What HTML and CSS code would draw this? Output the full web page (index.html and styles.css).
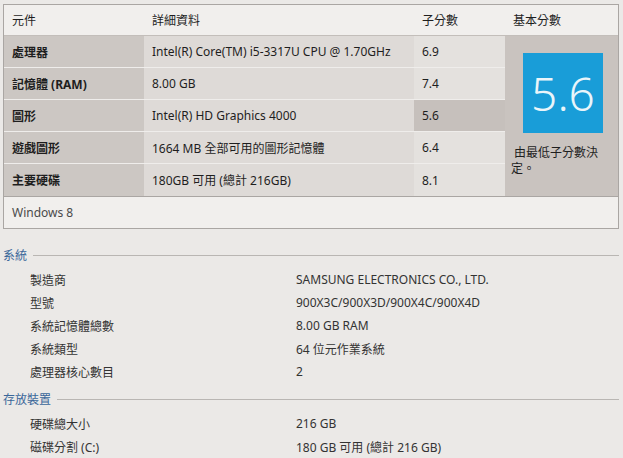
FILE: index.html
```html
<!DOCTYPE html>
<html lang="zh-Hant">
<head>
  <meta charset="UTF-8">
  <title>系統</title>
  <link rel="stylesheet" href="styles.css">
</head>
<body>

  <section class="score-panel">
    <div class="score-grid">
      <div class="head">元件</div>
      <div class="head">詳細資料</div>
      <div class="head">子分數</div>
      <div class="head">基本分數</div>

      <div class="name">處理器</div>
      <div class="detail">Intel(R) Core(TM) i5-3317U CPU @ 1.70GHz</div>
      <div class="sub">6.9</div>

      <div class="base">
        <div class="base-box">5.6</div>
        <p class="base-note">&nbsp;由最低子分數決定。</p>
      </div>

      <div class="name">記憶體 (RAM)</div>
      <div class="detail">8.00 GB</div>
      <div class="sub">7.4</div>

      <div class="name">圖形</div>
      <div class="detail">Intel(R) HD Graphics 4000</div>
      <div class="sub lowest">5.6</div>

      <div class="name">遊戲圖形</div>
      <div class="detail">1664 MB 全部可用的圖形記憶體</div>
      <div class="sub">6.4</div>

      <div class="name last">主要硬碟</div>
      <div class="detail last">180GB 可用 (總計 216GB)</div>
      <div class="sub last">8.1</div>
    </div>
    <div class="edition">Windows 8</div>
  </section>

  <section class="info info-system">
    <h2 class="info-title">系統</h2>
    <dl class="info-list">
      <dt>製造商</dt><dd>SAMSUNG ELECTRONICS CO., LTD.</dd>
      <dt>型號</dt><dd>900X3C/900X3D/900X4C/900X4D</dd>
      <dt>系統記憶體總數</dt><dd>8.00 GB RAM</dd>
      <dt>系統類型</dt><dd>64 位元作業系統</dd>
      <dt>處理器核心數目</dt><dd>2</dd>
    </dl>
  </section>

  <section class="info info-storage">
    <h2 class="info-title">存放裝置</h2>
    <dl class="info-list">
      <dt>硬碟總大小</dt><dd>216 GB</dd>
      <dt>磁碟分割 (C:)</dt><dd>180 GB 可用 (總計 216 GB)</dd>
    </dl>
  </section>

</body>
</html>
```

FILE: styles.css
```css
body {
  margin: 0;
  padding: 4px 4px 0 3px;
  font-family: "Noto Sans", "Noto Sans CJK TC", sans-serif;
  font-size: 12px;
  color: #1e1e1e;
  background-color: #ebe9e7;
}

.score-panel {
  border: 1px solid #aaa6a3;
  background-color: #f1efed;
}

.score-grid {
  display: grid;
  grid-template-columns: 140px 270px 91px 1fr;
  grid-template-rows: 31px repeat(5, 32px);
}

.score-grid > div {
  display: flex;
  align-items: center;
  padding-left: 8px;
}

.head {
  border-bottom: 1px solid #c3beba;
  background-color: #f1efed;
}

.name,
.detail,
.sub {
  border-bottom: 1px solid #efedeb;
}

.name {
  font-weight: bold;
  background-color: #ccc7c3;
}

.detail {
  background-color: #dedad7;
}

.sub {
  background-color: #e4e1de;
}

.sub.lowest {
  background-color: #c6c0bc;
}

.score-grid .last {
  border-bottom: none;
}

.score-grid .base {
  grid-column: 4;
  grid-row: 2 / 7;
  flex-direction: column;
  align-items: flex-start;
  padding: 17px 6px 0 6px;
  background-color: #c9c3bf;
}

.base-box {
  width: 80px;
  height: 80px;
  margin-left: 12px;
  display: flex;
  align-items: center;
  justify-content: center;
  background-color: #199dd8;
  color: #eaf5fa;
  font-size: 46px;
  font-weight: 300;
}

.base-note {
  margin: 12px 0 0 0;
  line-height: 16px;
}

.edition {
  height: 31px;
  display: flex;
  align-items: center;
  padding-left: 8px;
  border-top: 1px solid #aaa6a3;
  color: #4a4a4a;
}

.info-title {
  display: flex;
  align-items: center;
  gap: 6px;
  margin: 0;
  height: 26px;
  font-size: 12px;
  font-weight: normal;
  color: #3a679a;
}

.info-system .info-title {
  margin-top: 13px;
}

.info-storage .info-title {
  margin-top: 3px;
}

.info-title::after {
  content: "";
  flex: 1;
  border-top: 1px solid #b9b6b3;
}

.info-list {
  display: grid;
  grid-template-columns: 266px 1fr;
  grid-auto-rows: 23px;
  align-items: center;
  margin: 0;
  padding-left: 27px;
  color: #333;
}

.info-list dt {
  grid-column: 1;
}

.info-list dd {
  grid-column: 2;
  margin: 0;
}
```
